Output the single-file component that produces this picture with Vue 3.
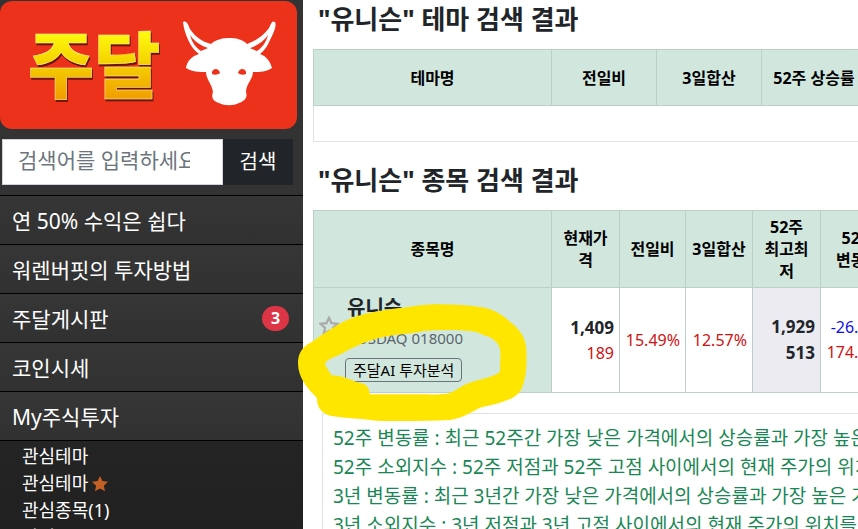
<template>
  <div class="layout">
    <!-- Sidebar -->
    <aside class="sidebar">
      <a href="#" class="logo" aria-label="주달">
        <svg viewBox="0 0 297 128" aria-hidden="true">
          <defs>
            <linearGradient id="gold" x1="0" y1="0" x2="0" y2="1">
              <stop offset="0.2" stop-color="#ffff10" />
              <stop offset="0.5" stop-color="#f5d500" />
              <stop offset="0.85" stop-color="#f0a000" />
            </linearGradient>
          </defs>
          <text x="28" y="91" class="logo-text">주달</text>
          <g fill="#fff">
            <path d="M183 21C187 19 188 24 190 28C195 36 203 41 211 43C216 38 224 37 229 37C236 37 242 38 247 43C256 40 264 34 269 27C271 23 272 19 275 21C277 25 273 33 270 39C267 46 264 50 260 53C266 55 270 60 272 67C266 71 259 71 253 71C253 78 246 83 246 91C248 97 244 100 239 102C233 105 225 105 219 102C213 100 211 97 213 91C212 83 206 78 206 71C199 71 192 71 186 67C187 60 192 55 199 53C190 47 184 31 183 21Z" />
          </g>
          <g fill="#ed321c">
            <path d="M190 34C194 40 201 45 208 47C206 48 203 49 201 50C195 46 192 41 190 34Z" />
            <path d="M268 34C264 40 257 45 250 47C252 48 255 49 257 50C263 46 266 41 268 34Z" />
            <path d="M212 71C213 67 219 67 220 72C218 74 214 74 212 73Z" />
            <path d="M246 71C245 67 239 67 238 72C240 74 244 74 246 73Z" />
          </g>
        </svg>
      </a>

      <form class="search" @submit.prevent>
        <input v-model="keyword" type="text" placeholder="검색어를 입력하세요" aria-label="검색어" />
        <button type="submit">검색</button>
      </form>

      <nav>
        <ul class="menu">
          <li v-for="item in menus" :key="item.name">
            <a href="#">
              {{ item.name }}
              <span v-if="item.badge" class="badge">{{ item.badge }}</span>
            </a>
          </li>
        </ul>
        <ul class="submenu">
          <li v-for="(item, index) in myMenus" :key="index">
            <a href="#">
              {{ item.name }}
              <svg v-if="item.star" class="menu-star" viewBox="0 0 16 16" aria-hidden="true">
                <path d="M8 0L10.4 5.1L16 5.8L11.9 9.7L13 15.3L8 12.6L3 15.3L4.1 9.7L0 5.8L5.6 5.1Z" />
              </svg>
            </a>
          </li>
        </ul>
      </nav>
    </aside>

    <!-- Search results -->
    <main class="content">
      <h2>"유니슨" 테마 검색 결과</h2>
      <table class="theme-table">
        <colgroup>
          <col class="col-name" />
          <col class="col-theme" span="3" />
        </colgroup>
        <thead>
          <tr>
            <th>테마명</th>
            <th>전일비</th>
            <th>3일합산</th>
            <th>52주 상승률</th>
          </tr>
        </thead>
        <tbody>
          <tr>
            <td colspan="4"></td>
          </tr>
        </tbody>
      </table>

      <h2>"유니슨" 종목 검색 결과</h2>
      <table class="stock-table">
        <colgroup>
          <col class="col-name" />
          <col class="col-price" />
          <col class="col-rate" />
          <col class="col-sum" />
          <col class="col-price" />
          <col class="col-change" />
        </colgroup>
        <thead>
          <tr>
            <th>종목명</th>
            <th>현재가격</th>
            <th>전일비</th>
            <th>3일합산</th>
            <th>52주<br />최고최저</th>
            <th>52주<br />변동률</th>
          </tr>
        </thead>
        <tbody>
          <tr>
            <td class="stock-cell">
              <div class="stock">
                <button type="button" class="star-button" aria-label="관심종목 추가">
                  <svg viewBox="0 0 18 18" aria-hidden="true">
                    <path d="M9 1.5L11.2 6.4L16.8 7L12.6 10.7L13.8 16.2L9 13.4L4.2 16.2L5.4 10.7L1.2 7L6.8 6.4Z" />
                  </svg>
                </button>
                <div class="stock-info">
                  <a href="#" class="stock-name">유니슨</a>
                  <span class="stock-code">KOSDAQ 018000</span>
                  <button type="button" class="ai-button">주달AI 투자분석</button>
                </div>
              </div>
            </td>
            <td><b>1,409</b><br /><span class="up">189</span></td>
            <td class="up">15.49%</td>
            <td class="up">12.57%</td>
            <td class="range"><b>1,929</b><br /><b>513</b></td>
            <td><span class="down">-26.96%</span><br /><span class="up">174.66%</span></td>
          </tr>
        </tbody>
      </table>

      <div class="notes">
        <p v-for="note in notes" :key="note">{{ note }}</p>
      </div>

      <!-- Highlight drawn over the AI analysis button -->
      <svg class="marker" viewBox="-6 306 690 366" aria-hidden="true">
        <path
          fill-rule="evenodd"
          d="M340 319C400 309 480 313 540 321C580 326 605 343 628 364C660 388 676 412 679 445C680 480 683 535 660 575C635 604 590 611 545 622C515 634 490 655 450 660C370 664 290 664 230 662C180 654 130 655 90 647C62 638 50 618 51 594C25 568 -6 535 -6 490C-6 462 4 442 35 426C75 399 115 370 160 352C220 331 285 327 340 319ZM75 490C80 478 105 472 130 458C165 438 205 420 255 410C300 401 325 404 370 393C420 390 475 388 530 396C550 408 570 407 584 422C602 438 602 450 601 473L600 515C580 532 535 538 510 548C485 555 465 576 440 581C420 584 390 583 350 583L209 583C209 562 198 551 178 548C155 543 140 529 94 526C88 512 77 504 75 490Z"
        />
      </svg>
    </main>
  </div>
</template>

<script setup>
import { ref } from 'vue';

const keyword = ref('');

const menus = [
  { name: '연 50% 수익은 쉽다' },
  { name: '워렌버핏의 투자방법' },
  { name: '주달게시판', badge: 3 },
  { name: '코인시세' },
  { name: 'My주식투자' }
];

const myMenus = [
  { name: '관심테마' },
  { name: '관심테마', star: true },
  { name: '관심종목(1)' },
  { name: '관심종목', star: true }
];

const notes = [
  '52주 변동률 : 최근 52주간 가장 낮은 가격에서의 상승률과 가장 높은 가격에서의 하락률',
  '52주 소외지수 : 52주 저점과 52주 고점 사이에서의 현재 주가의 위치를 나타냅니다',
  '3년 변동률 : 최근 3년간 가장 낮은 가격에서의 상승률과 가장 높은 가격에서의 하락률',
  '3년 소외지수 : 3년 저점과 3년 고점 사이에서의 현재 주가의 위치를 나타냅니다'
];
</script>

<style>
body {
  margin: 0;
  background: #fff;
}
</style>

<style scoped>
* {
  box-sizing: border-box;
}

.layout {
  display: flex;
  height: 100vh;
  overflow: hidden;
  color: #212529;
  font-family: "Noto Sans", "Noto Sans CJK KR", sans-serif;
  font-size: 16px;
}

a {
  color: inherit;
  text-decoration: none;
}

button,
input {
  font-family: inherit;
}

/* Sidebar */
.sidebar {
  flex: 0 0 303px;
  min-width: 0;
  background: #333;
  color: #fff;
}

.logo {
  display: block;
  margin: 1px 6px 10px 0;
  border-radius: 12px;
  background: #ed321c;
}

.logo svg {
  display: block;
  width: 100%;
}

.logo-text {
  font-family: "Noto Sans CJK KR", sans-serif;
  font-size: 72px;
  font-weight: 900;
  fill: url(#gold);
  stroke: #fff0a0;
  stroke-width: 0.5;
  filter: drop-shadow(1px 2px 0 #6b1505);
}

.search {
  display: flex;
  margin: 0 10px 10px 2px;
}

.search input {
  flex: 1;
  min-width: 0;
  height: 46px;
  padding: 0 32px 4px 15px;
  border: 1px solid #ced4da;
  border-radius: 0;
  font-size: 21px;
}

.search input::placeholder {
  color: #6c757d;
}

.search button {
  width: 70px;
  padding: 0 0 4px;
  border: none;
  background: #212529;
  color: #fff;
  font-size: 20px;
}

.menu,
.submenu {
  margin: 0;
  padding: 0;
  list-style: none;
}

.menu li {
  border-top: 1px solid #000;
  background: linear-gradient(#363636, #313131);
}

.menu a {
  display: flex;
  align-items: center;
  justify-content: space-between;
  height: 48px;
  padding: 0 14px 0 12px;
  font-size: 21px;
}

.badge {
  width: 27px;
  border-radius: 13px;
  background: #dc3545;
  font-size: 16px;
  font-weight: 700;
  line-height: 25px;
  text-align: center;
}

.submenu {
  height: 200px;
  padding-top: 2px;
  border-top: 1px solid #000;
  background: linear-gradient(#242424, #1c1c1c);
}

.submenu a {
  display: flex;
  align-items: center;
  gap: 4px;
  padding-left: 22px;
  font-size: 18px;
  line-height: 27px;
}

.menu-star {
  width: 16px;
  height: 16px;
  fill: #c45f26;
}

/* Results */
.content {
  position: relative;
  flex: 1;
  min-width: 0;
  padding-left: 10px;
}

h2 {
  margin: 3px 0 14px;
  padding: 0 5px;
  font-size: 26px;
  font-weight: 700;
  line-height: 32px;
  white-space: nowrap;
}

.theme-table + h2 {
  margin-top: 22px;
}

table {
  width: 100%;
  border-collapse: collapse;
  table-layout: fixed;
}

.col-name {
  width: 238px;
}

.col-theme {
  width: 105px;
}

.col-price {
  width: 68px;
}

.col-rate {
  width: 66px;
}

.col-sum {
  width: 67px;
}

.col-change {
  width: 75px;
}

th {
  padding: 5px;
  border: 1px solid #bcd0c7;
  background: #d1e7dd;
  color: #000;
  font-size: 16px;
  font-weight: 700;
  line-height: 22px;
}

.theme-table th {
  height: 56px;
}

.theme-table td {
  height: 36px;
  border: 1px solid #dee2e6;
}

.stock-table th {
  height: 77px;
}

.stock-table td {
  height: 105px;
  padding: 5px;
  border: 1px solid #bcd0c7;
  line-height: 25px;
  text-align: right;
}

.stock-table b {
  font-size: 17px;
}

.stock-table .stock-cell {
  background: #d1e7dd;
  text-align: left;
  vertical-align: top;
}

.stock-table .range {
  background: #ebebf1;
}

.up {
  color: #d01012;
}

.down {
  color: #1010e8;
}

.stock {
  display: flex;
  gap: 8px;
}

.star-button {
  width: 20px;
  padding: 0;
  border: none;
  background: none;
}

.star-button svg {
  display: block;
  width: 20px;
  height: 20px;
  margin-bottom: 24px;
  fill: none;
  stroke: #aaa;
  stroke-width: 2;
}

.stock-info {
  display: flex;
  flex-direction: column;
  align-items: flex-start;
}

.stock-name {
  font-size: 20px;
  font-weight: 700;
  line-height: 30px;
}

.stock-code {
  padding-bottom: 5px;
  color: #5c656c;
  font-size: 15px;
  line-height: 30px;
}

.ai-button {
  margin-left: -2px;
  padding: 0 7px;
  border: 1px solid #6c757d;
  border-radius: 4px;
  background: none;
  color: #000;
  font-size: 15px;
  line-height: 22px;
}

.notes {
  margin: 20px 0 0 9px;
  padding: 10px;
  border: 1px solid #dee2e6;
  border-right: none;
  color: #198754;
  font-size: 19px;
}

.notes p {
  margin: 0;
  line-height: 29px;
  white-space: nowrap;
}

.marker {
  position: absolute;
  top: 302px;
  left: -5px;
  width: 230px;
  fill: #ffe600;
  pointer-events: none;
}
</style>
